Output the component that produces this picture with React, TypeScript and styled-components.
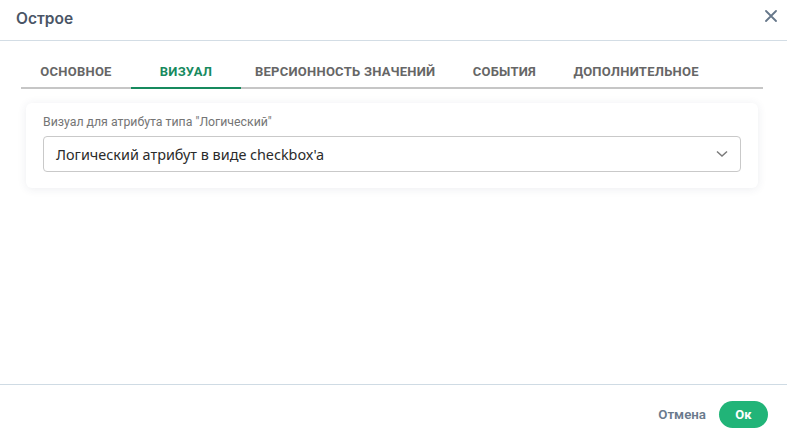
import styled, { createGlobalStyle } from 'styled-components';

const GlobalStyle = createGlobalStyle`
    html, body {
        margin: 0;
        padding: 0;
        background: #ffffff;
    }
    * {
        box-sizing: border-box;
    }
`;

const tabs = ['Основное', 'Визуал', 'Версионность значений', 'События', 'Дополнительное'];

// Début du style -------------->
const Dialog = styled.div`
    width: 787px;
    height: 442px;
    display: flex;
    flex-direction: column;
    background: #ffffff;
    font-family: Roboto, 'Liberation Sans', sans-serif;
`;
const Header = styled.div`
    height: 41px;
    flex-shrink: 0;
    display: flex;
    align-items: center;
    justify-content: space-between;
    padding: 0 8px 3px 16px;
    border-bottom: 1px solid #d3dde5;
`;
const Title = styled.h2`
    margin: 0;
    font-family: Inter, 'Noto Sans', sans-serif;
    font-size: 15.5px;
    font-weight: 600;
    color: #4a5566;
`;
const CloseButton = styled.button`
    border: none;
    background: none;
    padding: 2px;
    display: flex;
    margin-top: -6px;
    cursor: pointer;
`;
const Body = styled.div`
    flex: 1;
    padding: 13px 24px 0 21px;
    display: flex;
    flex-direction: column;
`;
const TabList = styled.div`
    display: flex;
    border-bottom: 2px solid #c6c6c6;
`;
const Tab = styled.button<{ $active?: boolean }>`
    min-width: 110px;
    height: 35px;
    padding: 2px 14px 0 14px;
    margin-bottom: -2px;
    border: none;
    background: none;
    border-bottom: 2px solid ${(p) => (p.$active ? '#178a5e' : 'transparent')};
    color: ${(p) => (p.$active ? '#178a5e' : '#666666')};
    font-family: Roboto, 'Liberation Sans', sans-serif;
    font-size: 13px;
    font-weight: 700;
    text-transform: uppercase;
    letter-spacing: 0.25px;
    cursor: pointer;
`;
const Card = styled.div`
    margin: 14px 5px 0 5px;
    padding: 12px 17px 16px 17px;
    background: #ffffff;
    border-radius: 6px;
    box-shadow: 0 1px 10px rgba(40, 60, 90, 0.09);
    display: flex;
    flex-direction: column;
    gap: 7px;
`;
const Label = styled.label`
    font-size: 12.3px;
    color: #757575;
`;
const Select = styled.div`
    height: 36px;
    border: 1px solid #c9c9c9;
    border-radius: 4px;
    display: flex;
    align-items: center;
    justify-content: space-between;
    padding: 0 12px 0 12px;
    font-family: 'Noto Sans', 'Open Sans', sans-serif;
    font-size: 14.4px;
    color: #2b2b2b;
`;
const Footer = styled.div`
    height: 58px;
    flex-shrink: 0;
    border-top: 1px solid #cfdbe4;
    display: flex;
    align-items: center;
    justify-content: flex-end;
    gap: 13px;
    padding: 2px 19px 0 0;
`;
const CancelButton = styled.button`
    border: none;
    background: none;
    padding: 0;
    font-family: Roboto, 'Liberation Sans', sans-serif;
    font-size: 13.3px;
    font-weight: 600;
    color: #6a7a8c;
    cursor: pointer;
`;
const OkButton = styled.button`
    width: 49px;
    height: 27px;
    border: none;
    border-radius: 14px;
    background: #21b478;
    color: #ffffff;
    font-family: Roboto, 'Liberation Sans', sans-serif;
    font-size: 13px;
    font-weight: 700;
    cursor: pointer;
`;
// Fin du style --------------//

export default function App() {
    return (
        <>
            <GlobalStyle />
            <Dialog>
                <Header>
                    <Title>Острое</Title>
                    <CloseButton aria-label="close">
                        <svg width="12" height="12" viewBox="0 0 12 12">
                            <path d="M1 1L11 11M11 1L1 11" stroke="#66778a" strokeWidth="1.8" strokeLinecap="round" />
                        </svg>
                    </CloseButton>
                </Header>
                <Body>
                    <TabList>
                        {tabs.map((t, i) => (
                            <Tab key={t} $active={i === 1}>
                                {t}
                            </Tab>
                        ))}
                    </TabList>
                    <Card>
                        <Label>Визуал для атрибута типа "Логический"</Label>
                        <Select>
                            <span>Логический атрибут в виде checkbox'a</span>
                            <svg width="12" height="8" viewBox="0 0 12 8">
                                <path d="M1 1.5L6 6L11 1.5" stroke="#7a7a7a" strokeWidth="1.5" fill="none" />
                            </svg>
                        </Select>
                    </Card>
                </Body>
                <Footer>
                    <CancelButton>Отмена</CancelButton>
                    <OkButton>Ок</OkButton>
                </Footer>
            </Dialog>
        </>
    );
}
